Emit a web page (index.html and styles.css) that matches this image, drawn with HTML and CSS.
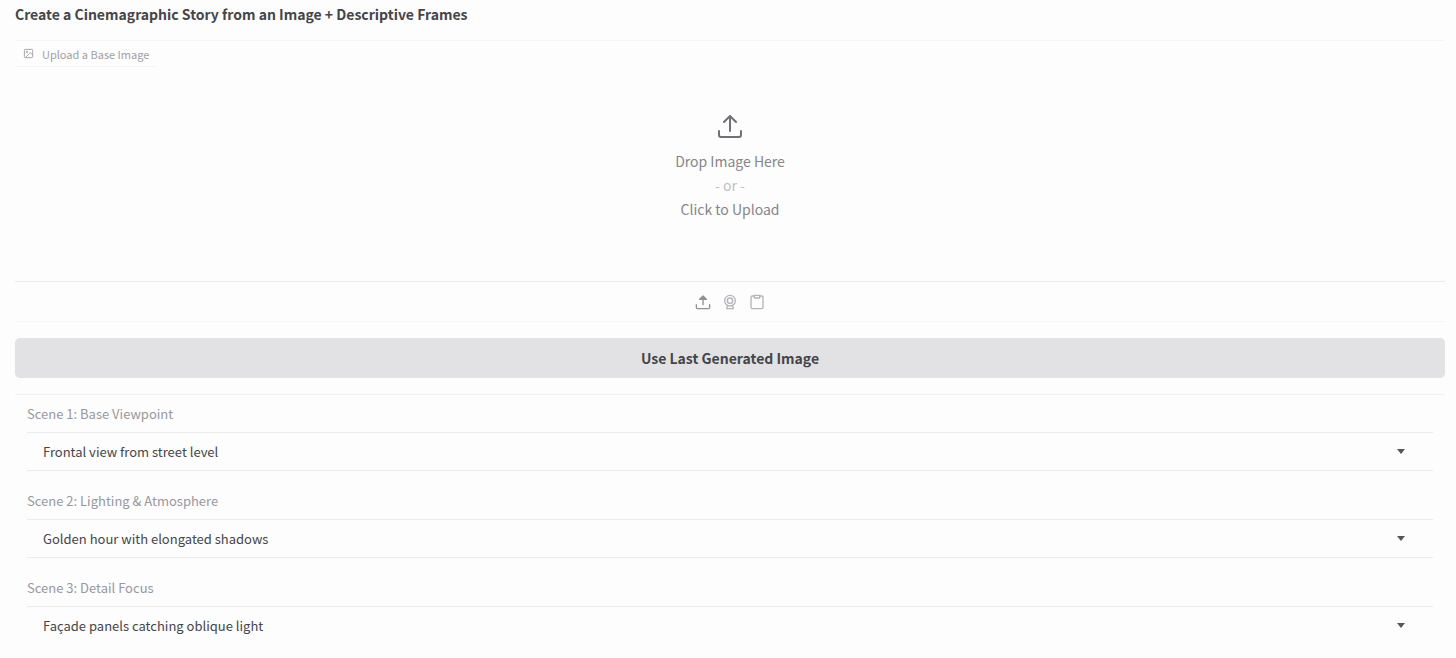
FILE: index.html
```html
<!DOCTYPE html>
<html lang="en">
<head>
    <meta charset="UTF-8">
    <meta name="viewport" content="width=device-width, initial-scale=1.0">
    <title>Cinemagraphic Story</title>
    <link rel="stylesheet" href="styles.css">
</head>
<body>
    <main class="container">
        <h1>Create a Cinemagraphic Story from an Image + Descriptive Frames</h1>

        <section class="upload">
            <label class="upload-label" for="baseImage">
                <svg class="icon-image" viewBox="0 0 24 24" fill="none" stroke="currentColor" stroke-width="2">
                    <rect x="3" y="3" width="18" height="18" rx="2"/>
                    <circle cx="8.5" cy="8.5" r="1.5"/>
                    <path d="M21 15l-5-5L5 21"/>
                </svg>
                Upload a Base Image
            </label>
            <button class="drop-area" type="button" onclick="openPicker()">
                <svg class="icon-drop" viewBox="0 0 24 24" fill="none" stroke="currentColor" stroke-width="2" stroke-linecap="round" stroke-linejoin="round">
                    <path d="M1 16v4a2 2 0 0 0 2 2h18a2 2 0 0 0 2-2v-4"/>
                    <path d="M6 7l6-6 6 6M12 1v15"/>
                </svg>
                <span>Drop Image Here</span>
                <span class="or">- or -</span>
                <span>Click to Upload</span>
            </button>
            <input type="file" id="baseImage" accept="image/*" hidden>
            <div class="sources">
                <button class="source dark" type="button" aria-label="Upload file" onclick="openPicker()">
                    <svg viewBox="0 0 24 24" fill="none" stroke="currentColor" stroke-width="2" stroke-linecap="round" stroke-linejoin="round">
                        <path d="M2 16v4a2 2 0 0 0 2 2h16a2 2 0 0 0 2-2v-4"/>
                        <path d="M7 8l5-5 5 5zM12 4v12" fill="currentColor"/>
                    </svg>
                </button>
                <button class="source" type="button" aria-label="Capture from camera">
                    <svg viewBox="0 0 24 24" fill="none" stroke="currentColor" stroke-width="2" stroke-linecap="round" stroke-linejoin="round">
                        <circle cx="12" cy="10" r="8"/>
                        <circle cx="12" cy="10" r="4"/>
                        <path d="M8 18l-1 4h10l-1-4"/>
                    </svg>
                </button>
                <button class="source" type="button" aria-label="Paste from clipboard">
                    <svg viewBox="0 0 24 24" fill="none" stroke="currentColor" stroke-width="2" stroke-linecap="round" stroke-linejoin="round">
                        <path d="M16 3h3a2 2 0 0 1 2 2v15a2 2 0 0 1-2 2H5a2 2 0 0 1-2-2V5a2 2 0 0 1 2-2h3"/>
                        <path d="M8 2h8v4H8z"/>
                    </svg>
                </button>
            </div>
        </section>

        <button class="use-last" type="button">Use Last Generated Image</button>

        <section class="scenes">
            <div class="scene">
                <label for="viewpoint">Scene 1: Base Viewpoint</label>
                <div class="dropdown">
                    <select id="viewpoint">
                        <option>Frontal view from street level</option>
                    </select>
                </div>
            </div>
            <div class="scene">
                <label for="lighting">Scene 2: Lighting &amp; Atmosphere</label>
                <div class="dropdown">
                    <select id="lighting">
                        <option>Golden hour with elongated shadows</option>
                    </select>
                </div>
            </div>
            <div class="scene">
                <label for="detail">Scene 3: Detail Focus</label>
                <div class="dropdown">
                    <select id="detail">
                        <option>Façade panels catching oblique light</option>
                    </select>
                </div>
            </div>
        </section>
    </main>

    <script>
        function openPicker() {
            document.getElementById("baseImage").click();
        }
    </script>
</body>
</html>
```
FILE: styles.css
```css
* {
    box-sizing: border-box;
}
body {
    margin: 0;
    background: #fdfdfd;
    color: #45454a;
    font-family: "Noto Sans CJK SC", "Open Sans", sans-serif;
    font-size: 13px;
    line-height: 20px;
}
button, select {
    font: inherit;
    color: inherit;
    background: none;
    border: none;
    padding: 0;
    cursor: pointer;
}
.container {
    padding: 4px 11px 0 15px;
}
h1 {
    margin: 0;
    font-size: 14px;
    line-height: 20px;
    font-weight: bold;
}
.upload {
    margin-top: 16px;
    border-top: 1px solid #f5f5f5;
    border-bottom: 1px solid #f5f5f5;
}
.upload-label {
    display: flex;
    align-items: center;
    gap: 8px;
    width: max-content;
    height: 26px;
    padding: 0 8px;
    border-bottom: 1px solid #f4f4f5;
    color: #a0a0a5;
    font-size: 11px;
}
.icon-image {
    width: 11px;
    height: 11px;
}
.drop-area {
    display: flex;
    flex-direction: column;
    align-items: center;
    width: 100%;
    height: 214px;
    padding-top: 48px;
    color: #85858a;
    font-size: 14px;
    line-height: 24px;
}
.icon-drop {
    width: 24px;
    height: 24px;
    margin-bottom: 10px;
    color: #707075;
}
.or {
    color: #c0c0c4;
}
.sources {
    display: flex;
    justify-content: center;
    align-items: center;
    gap: 11px;
    height: 40px;
    border-top: 1px solid #ececed;
}
.source {
    width: 16px;
    height: 16px;
    color: #b5b5b9;
}
.source svg {
    display: block;
    width: 16px;
    height: 16px;
}
.dark {
    color: #909095;
}
.use-last {
    display: block;
    width: 100%;
    height: 40px;
    margin: 16px 0;
    border-radius: 5px;
    background: #e2e2e4;
    font-size: 14px;
    font-weight: bold;
}
.scenes {
    border-top: 1px solid #f0f0f1;
    padding: 9px 12px 0;
}
.scene {
    margin-bottom: 20px;
}
.scene label {
    display: block;
    margin-bottom: 8px;
    color: #98989d;
}
.dropdown {
    display: grid;
    align-items: center;
    height: 39px;
    border-top: 1px solid #ececed;
    border-bottom: 1px solid #ececed;
}
.dropdown select {
    grid-area: 1 / 1;
    width: 100%;
    height: 36px;
    padding: 0 16px;
    appearance: none;
}
.dropdown::after {
    content: "";
    grid-area: 1 / 1;
    justify-self: end;
    margin-right: 28px;
    border: 4px solid transparent;
    border-top: 5px solid #55555a;
    border-bottom: none;
    pointer-events: none;
}
.scene:last-child {
    margin-bottom: 0;
}
.scene:last-child .dropdown {
    border-bottom-color: transparent;
}
```
